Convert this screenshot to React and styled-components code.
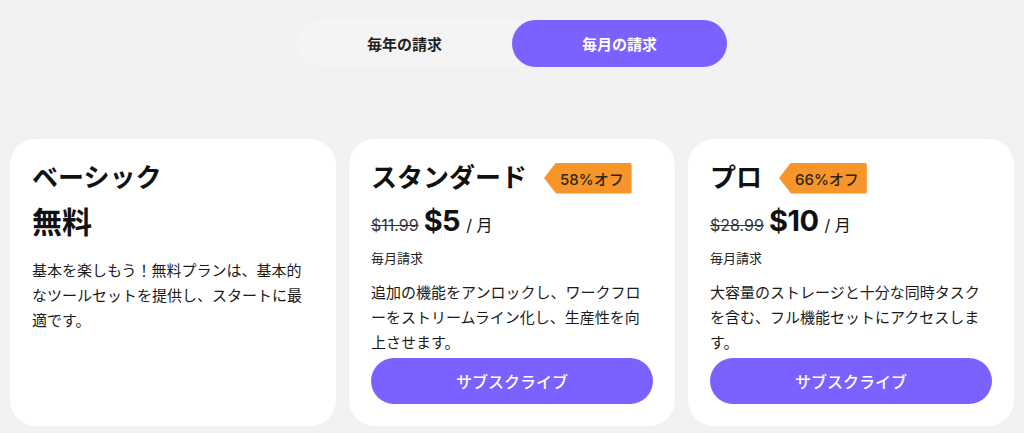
import React, { useState } from 'react';
import styled, { createGlobalStyle } from 'styled-components';

const GlobalStyle = createGlobalStyle`
  html, body {
    margin: 0;
    padding: 0;
    background: #f2f2f2;
    font-family: 'Inter', 'Noto Sans CJK JP', sans-serif;
    color: #141414;
  }
  * { box-sizing: border-box; }
`;

const plans = [
  {
    name: 'ベーシック',
    free: true,
    desc: '基本を楽しもう！無料プランは、基本的なツールセットを提供し、スタートに最適です。',
  },
  {
    name: 'スタンダード',
    badge: '58%オフ',
    oldPrice: '$11.99',
    price: '$5',
    desc: '追加の機能をアンロックし、ワークフローをストリームライン化し、生産性を向上させます。',
  },
  {
    name: 'プロ',
    badge: '66%オフ',
    oldPrice: '$28.99',
    price: '$10',
    desc: '大容量のストレージと十分な同時タスクを含む、フル機能セットにアクセスします。',
  },
];

function App() {
  const [billing, setBilling] = useState('monthly');

  return (
    <Page>
      <GlobalStyle />
      <Toggle>
        <ToggleBtn active={billing === 'yearly'} onClick={() => setBilling('yearly')}>
          毎年の請求
        </ToggleBtn>
        <ToggleBtn active={billing === 'monthly'} onClick={() => setBilling('monthly')}>
          毎月の請求
        </ToggleBtn>
      </Toggle>
      <Cards>
        {plans.map((p) => (
          <Card key={p.name}>
            <Header>
              <Title>{p.name}</Title>
              {p.badge && <Badge>{p.badge}</Badge>}
            </Header>
            {p.free ? (
              <Free>無料</Free>
            ) : (
              <>
                <PriceRow>
                  <OldPrice>{p.oldPrice}</OldPrice>
                  <Price>{p.price}</Price>
                  <Per>/ 月</Per>
                </PriceRow>
                <Billing>毎月請求</Billing>
              </>
            )}
            <Desc free={p.free}>{p.desc}</Desc>
            {!p.free && <Subscribe>サブスクライブ</Subscribe>}
          </Card>
        ))}
      </Cards>
    </Page>
  );
}

const Page = styled.div`
  padding: 20px 10px 0;
  display: flex;
  flex-direction: column;
  align-items: center;
`;

const Toggle = styled.div`
  display: grid;
  grid-template-columns: 215px 215px;
  background: #f4f4f4;
  border-radius: 24px;
`;

const ToggleBtn = styled.button`
  height: 47px;
  border: none;
  border-radius: 24px;
  font-family: inherit;
  font-size: 15px;
  font-weight: 700;
  cursor: pointer;
  background: ${(p) => (p.active ? '#7b61ff' : 'transparent')};
  color: ${(p) => (p.active ? '#fff' : '#1f1f1f')};
`;

const Cards = styled.div`
  margin-top: 72px;
  width: 100%;
  display: grid;
  grid-template-columns: repeat(3, 1fr);
  gap: 13px;
`;

const Card = styled.div`
  background: #fff;
  border-radius: 26px;
  padding: 22px;
  display: flex;
  flex-direction: column;
`;

const Header = styled.div`
  display: flex;
  align-items: center;
  gap: 17px;
`;

const Title = styled.h3`
  margin: 0;
  font-size: 26px;
  line-height: 34px;
  font-weight: 700;
  color: #111;
`;

const Badge = styled.span`
  display: inline-flex;
  align-items: center;
  height: 31px;
  padding: 0 8px 0 16px;
  background: #f8952a;
  color: #2e2410;
  font-size: 15px;
  font-weight: 500;
  clip-path: polygon(12px 0, 100% 0, 100% 100%, 12px 100%, 0 50%);
  border-radius: 0 2px 2px 0;
`;

const Free = styled.div`
  margin-top: 7px;
  font-size: 30px;
  line-height: 40px;
  font-weight: 700;
  color: #111;
`;

const PriceRow = styled.div`
  margin-top: 6px;
  display: flex;
  align-items: baseline;
  height: 40px;
  line-height: 40px;
`;

const OldPrice = styled.span`
  font-size: 16px;
  color: #333;
  text-decoration: line-through;
  margin-right: 5px;
`;

const Price = styled.span`
  font-size: 29px;
  font-weight: 700;
  color: #111;
  letter-spacing: -0.5px;
  margin-right: 6px;
`;

const Per = styled.span`
  font-size: 16px;
  color: #111;
`;

const Billing = styled.div`
  margin-top: 7px;
  font-size: 13px;
  line-height: 20px;
  color: #222;
`;

const Desc = styled.p`
  margin: ${(p) => (p.free ? '16px 0 0' : '12px 0 0')};
  font-size: 15px;
  line-height: 25px;
  color: #1a1a1a;
`;

const Subscribe = styled.button`
  margin-top: 3px;
  height: 46px;
  width: 100%;
  border: none;
  border-radius: 23px;
  background: #7b61ff;
  color: #fff;
  font-family: inherit;
  font-size: 16px;
  font-weight: 500;
  cursor: pointer;
`;

export default App;
